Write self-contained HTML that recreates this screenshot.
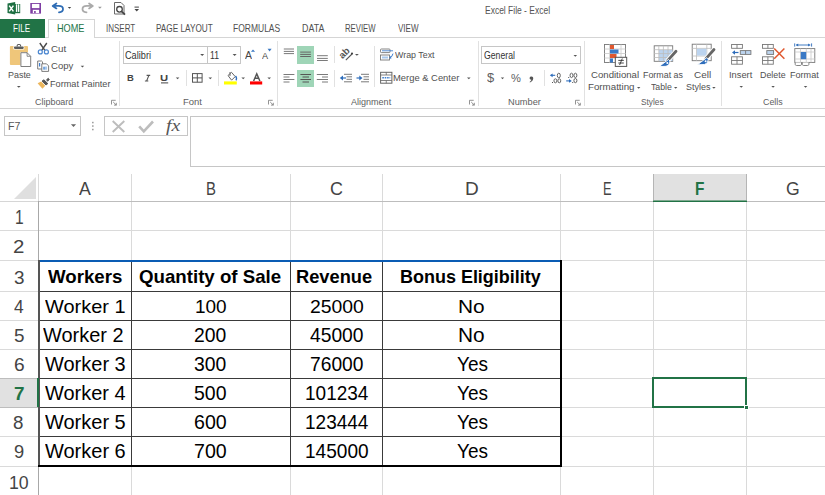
<!DOCTYPE html>
<html><head><meta charset="utf-8"><style>
html,body{margin:0;padding:0;background:#fff;}
body{width:825px;height:495px;overflow:hidden;position:relative;font-family:"Liberation Sans",sans-serif;}
.a{position:absolute;}
.t{position:absolute;white-space:nowrap;transform-origin:0 0;font-family:"Liberation Sans",sans-serif;}
svg{position:absolute;overflow:visible;}
</style></head><body>
<!-- tabs -->
<div class="a" style="left:0;top:37px;width:825px;height:1px;background:#d5d5d5"></div>
<div class="a" style="left:0;top:19px;width:45px;height:19px;background:#217346"></div>
<div class="a" style="left:48px;top:19px;width:45px;height:18px;background:#fff;border:1px solid #d5d5d5;border-bottom:none"></div>
<!-- ribbon bottom -->
<div class="a" style="left:0;top:108px;width:825px;height:1px;background:#d4d4d4"></div>
<!-- group separators -->
<div class="a" style="left:119px;top:41px;width:1px;height:65px;background:#e1e1e1"></div>
<div class="a" style="left:277px;top:41px;width:1px;height:65px;background:#e1e1e1"></div>
<div class="a" style="left:478px;top:41px;width:1px;height:65px;background:#e1e1e1"></div>
<div class="a" style="left:584px;top:41px;width:1px;height:65px;background:#e1e1e1"></div>
<div class="a" style="left:721px;top:41px;width:1px;height:65px;background:#e1e1e1"></div>
<!-- font boxes -->
<div class="a" style="left:123px;top:46px;width:116px;height:16px;border:1px solid #c6c6c6;background:#fff"></div>
<div class="a" style="left:207px;top:46px;width:1px;height:18px;background:#c6c6c6"></div>
<div class="a" style="left:186px;top:70px;width:1px;height:16px;background:#e1e1e1"></div>
<div class="a" style="left:218px;top:70px;width:1px;height:16px;background:#e1e1e1"></div>
<!-- alignment highlights -->
<div class="a" style="left:297px;top:46px;width:17px;height:18px;background:#9fd5b7"></div>
<div class="a" style="left:297px;top:70px;width:17px;height:17px;background:#9fd5b7"></div>
<div class="a" style="left:334px;top:46px;width:1px;height:17px;background:#e1e1e1"></div>
<div class="a" style="left:334px;top:70px;width:1px;height:17px;background:#e1e1e1"></div>
<div class="a" style="left:374px;top:46px;width:1px;height:41px;background:#e1e1e1"></div>
<!-- number box -->
<div class="a" style="left:481px;top:46px;width:98px;height:16px;border:1px solid #c6c6c6;background:#fff"></div>
<div class="a" style="left:544px;top:70px;width:1px;height:16px;background:#e1e1e1"></div>
<!-- formula bar -->
<div class="a" style="left:4px;top:116px;width:75px;height:18px;border:1px solid #c6c6c6"></div>
<div class="a" style="left:104px;top:116px;width:82px;height:18px;border:1px solid #c6c6c6"></div>
<div class="a" style="left:190px;top:116px;width:640px;height:49px;border:1px solid #c6c6c6"></div>

<!-- ===== grid ===== -->
<!-- highlighted headers -->
<div class="a" style="left:653px;top:174px;width:93px;height:27px;background:#e1e1e1"></div>
<div class="a" style="left:0;top:378px;width:38px;height:29px;background:#e1e1e1"></div>
<!-- column header separators -->
<div class="a" style="left:38px;top:174px;width:1px;height:27px;background:#dadada"></div>
<div class="a" style="left:131px;top:174px;width:1px;height:321px;background:#dadada"></div>
<div class="a" style="left:290px;top:174px;width:1px;height:321px;background:#dadada"></div>
<div class="a" style="left:382px;top:174px;width:1px;height:321px;background:#dadada"></div>
<div class="a" style="left:560px;top:174px;width:1px;height:321px;background:#dadada"></div>
<div class="a" style="left:653px;top:174px;width:1px;height:321px;background:#dadada"></div>
<div class="a" style="left:746px;top:174px;width:1px;height:321px;background:#dadada"></div>
<div class="a" style="left:653px;top:174px;width:1px;height:27px;background:#b5b5b5"></div>
<div class="a" style="left:746px;top:174px;width:1px;height:27px;background:#b5b5b5"></div>
<!-- row lines -->
<div class="a" style="left:0;top:230px;width:825px;height:1px;background:#dadada"></div>
<div class="a" style="left:0;top:260px;width:825px;height:1px;background:#dadada"></div>
<div class="a" style="left:0;top:291px;width:825px;height:1px;background:#dadada"></div>
<div class="a" style="left:0;top:320px;width:825px;height:1px;background:#dadada"></div>
<div class="a" style="left:0;top:349px;width:825px;height:1px;background:#dadada"></div>
<div class="a" style="left:0;top:378px;width:825px;height:1px;background:#dadada"></div>
<div class="a" style="left:0;top:407px;width:825px;height:1px;background:#dadada"></div>
<div class="a" style="left:0;top:436px;width:825px;height:1px;background:#dadada"></div>
<div class="a" style="left:0;top:466px;width:825px;height:1px;background:#dadada"></div>
<div class="a" style="left:0;top:378px;width:38px;height:1px;background:#bdbdbd"></div>
<div class="a" style="left:0;top:407px;width:38px;height:1px;background:#bdbdbd"></div>
<!-- header bottom & row header right -->
<div class="a" style="left:0;top:201px;width:38px;height:1px;background:#d6d6d6"></div>
<div class="a" style="left:38px;top:201px;width:787px;height:1px;background:#bdbdbd"></div>
<div class="a" style="left:38px;top:201px;width:1px;height:294px;background:#a8a8a8"></div>
<div class="a" style="left:653px;top:200px;width:94px;height:1px;background:#7fa98f"></div>
<div class="a" style="left:653px;top:201px;width:94px;height:1px;background:#217346"></div>
<div class="a" style="left:37px;top:378px;width:2px;height:29px;background:#217346"></div>
<!-- corner triangle -->
<svg style="left:0;top:0" width="1" height="1"></svg>
<svg style="left:14px;top:177px" width="22" height="22" viewBox="0 0 22 22"><polygon points="22,0 22,22 0,22" fill="#dfdfdf"/></svg>

<!-- table inner borders -->
<div class="a" style="left:38px;top:291px;width:523px;height:1px;background:#3a3a3a"></div>
<div class="a" style="left:38px;top:320px;width:523px;height:1px;background:#3a3a3a"></div>
<div class="a" style="left:38px;top:349px;width:523px;height:1px;background:#3a3a3a"></div>
<div class="a" style="left:38px;top:378px;width:523px;height:1px;background:#3a3a3a"></div>
<div class="a" style="left:38px;top:407px;width:523px;height:1px;background:#3a3a3a"></div>
<div class="a" style="left:38px;top:436px;width:523px;height:1px;background:#3a3a3a"></div>
<div class="a" style="left:131px;top:260px;width:1px;height:206px;background:#3a3a3a"></div>
<div class="a" style="left:290px;top:260px;width:1px;height:206px;background:#3a3a3a"></div>
<div class="a" style="left:382px;top:260px;width:1px;height:206px;background:#3a3a3a"></div>
<!-- table outer -->
<div class="a" style="left:38px;top:260px;width:2px;height:207px;background:#555"></div>
<div class="a" style="left:560px;top:260px;width:2px;height:207px;background:#000"></div>
<div class="a" style="left:38px;top:465px;width:524px;height:2px;background:#000"></div>
<div class="a" style="left:40px;top:260px;width:520px;height:2px;background:#0a5cb4"></div>
<div class="a" style="left:37px;top:378px;width:2px;height:29px;background:#217346"></div>

<!-- selection -->
<div class="a" style="left:652px;top:377px;width:91px;height:27px;border:2px solid #217346"></div>
<div class="a" style="left:744px;top:405px;width:5px;height:5px;background:#217346;border:1px solid #fff;box-sizing:border-box;"></div>
<svg style="left:0;top:0" width="825" height="175" viewBox="0 0 825 175">
<!-- QAT: excel logo -->
<path d="M7.5 3.6 L15.2 2.1 L15.2 14.6 L7.5 13.1 Z" fill="#1d6f42"/>
<rect x="14" y="4" width="6.2" height="9.2" fill="#1d6f42"/>
<rect x="15.9" y="4.3" width="1.4" height="7.6" fill="#fff"/>
<rect x="18" y="4.3" width="1.3" height="7.6" fill="#fff"/>
<path d="M9.2 5.6 L13.4 11.4 M13.4 5.6 L9.2 11.4" stroke="#fff" stroke-width="1.5"/>
<!-- save -->
<rect x="30.3" y="3" width="10.7" height="10.6" fill="#7e3ea3"/>
<rect x="31.9" y="3.9" width="7.5" height="4.2" fill="#fff"/>
<rect x="32.8" y="9.8" width="6.3" height="3.3" fill="#fff"/>
<rect x="34.1" y="11" width="1.6" height="2.1" fill="#7e3ea3"/>
<!-- undo -->
<path d="M56.4 3.4 L52.7 5.9 L56.4 8.4 M52.9 5.9 H58.6 C61.8 5.9 63 7.6 63 9.2 C63 10.8 61.8 12 59 12.4" fill="none" stroke="#2f6db5" stroke-width="1.8" stroke-linecap="round" stroke-linejoin="round"/>
<path d="M67.8 6.9 H71.2 L69.5 8.8 Z" fill="#444"/>
<!-- redo -->
<path d="M89.1 3.4 L92.8 5.9 L89.1 8.4 M92.6 5.9 H86.9 C83.7 5.9 82.5 7.6 82.5 9.2 C82.5 10.8 83.7 12 86.5 12.4" fill="none" stroke="#aaaaaa" stroke-width="1.8" stroke-linecap="round" stroke-linejoin="round"/>
<path d="M98 6.8 H101.8 L99.9 8.8 Z" fill="#9a9a9a"/>
<!-- print preview -->
<path d="M114.5 2.5 H121 L124 5.5 V14 H114.5 Z" fill="#fff" stroke="#6a6a6a" stroke-width="1"/>
<circle cx="119.5" cy="9.3" r="2.8" fill="#fff" stroke="#444" stroke-width="1.3"/>
<path d="M121.5 11.3 L125 14.6" stroke="#444" stroke-width="1.8"/>
<!-- customize -->
<rect x="134.5" y="6.6" width="4.4" height="1" fill="#444"/>
<path d="M134.5 9 H139 L136.75 11.4 Z" fill="#444"/>

<!-- Paste -->
<rect x="9.9" y="46" width="18.1" height="18.9" rx="1" fill="#efc67a"/>
<rect x="13.3" y="45.9" width="11" height="3.6" rx="1" fill="#fff"/>
<rect x="14" y="46.4" width="9.7" height="2.5" rx="0.8" fill="#5c5c5c"/>
<path d="M17.2 46.6 V45.6 Q17.2 44.5 18.3 44.5 H19.5 Q20.6 44.5 20.6 45.6 V46.6" fill="none" stroke="#5c5c5c" stroke-width="1.1"/>
<path d="M20.4 52.2 H27.3 L31.2 56.1 V67 H20.4 Z" fill="#fff"/>
<path d="M20.9 52.7 H27.1 L30.7 56.3 V66.5 H20.9 Z" fill="#fff" stroke="#707070" stroke-width="0.9"/>
<path d="M27.1 52.7 V56.3 H30.7" fill="none" stroke="#707070" stroke-width="0.8"/>
<path d="M16.9 86 H20.7 L18.8 87.8 Z" fill="#555"/>
<!-- Cut -->
<path d="M39.8 43 L44.9 50.3 M46.8 43 L41.7 50.3" stroke="#4a4a4a" stroke-width="1.4"/>
<circle cx="40.3" cy="51.9" r="2" fill="none" stroke="#4a86d0" stroke-width="1.2"/>
<circle cx="46.4" cy="51.9" r="2" fill="none" stroke="#4a86d0" stroke-width="1.2"/>
<!-- Copy -->
<path d="M37.7 61 H41.7 L42.5 61.8 V69 H37.7 Z" fill="#fff" stroke="#6d6d6d" stroke-width="0.9"/>
<rect x="39" y="63" width="1.2" height="3.5" fill="#3f7fcf"/>
<path d="M41.8 63.8 H46.5 L48.6 65.9 V71.4 H41.8 Z" fill="#fff" stroke="#6d6d6d" stroke-width="0.9"/>
<rect x="43.3" y="66.5" width="3.8" height="3.2" fill="#a8c8ec"/>
<rect x="43.5" y="67" width="1" height="2.5" fill="#3f7fcf"/>
<path d="M80.7 65.8 H84.2 L82.45 67.5 Z" fill="#555"/>
<!-- Format painter -->
<path d="M37.6 83.3 L41.1 81.6 L45.3 85.8 L42.4 88.7 Z" fill="#ecb65c"/>
<path d="M42 81.1 L43.9 79.8 L47.8 83.6 L46 85 Z" fill="#555" stroke="#555" stroke-width="1" stroke-linejoin="round"/>
<path d="M46.6 79.7 L48.3 78.3 L49.3 79.5 L47.6 81.3 Z" fill="#555" stroke="#555" stroke-width="0.9" stroke-linejoin="round"/>
<!-- launchers -->
<g fill="none" stroke="#777" stroke-width="0.8">
<path d="M111.5 104.5 V100.3 H115.7 M113.2 102 L116.3 105.1 M116.3 102.8 V105.1 H114"/>
<path d="M268.5 104.5 V100.3 H272.7 M270.2 102 L273.3 105.1 M273.3 102.8 V105.1 H271"/>
<path d="M469.5 104.5 V100.3 H473.7 M471.2 102 L474.3 105.1 M474.3 102.8 V105.1 H472"/>
<path d="M575.5 104.5 V100.3 H579.7 M577.2 102 L580.3 105.1 M580.3 102.8 V105.1 H578"/>
</g>

<!-- font dropdowns -->
<path d="M200.2 54 H204.2 L202.2 56 Z" fill="#555"/>
<path d="M232.6 54 H236.6 L234.6 56 Z" fill="#555"/>
<!-- grow / shrink triangles -->
<path d="M250.9 51.8 L253 49.4 L255.1 51.8 Z" fill="#3a78c3"/>
<path d="M267.6 48.8 H271.6 L269.6 51.6 Z" fill="#3a78c3"/>
<!-- italic I -->
<path d="M146.6 75.4 H150.2 M148.9 75.4 L146.6 81 M144.9 81 H148.3" stroke="#555" stroke-width="1.1" fill="none"/>
<!-- underline -->
<rect x="161" y="82.4" width="7.2" height="1" fill="#444"/>
<path d="M175.8 77.5 H179.4 L177.6 79.3 Z" fill="#555"/>
<!-- borders -->
<rect x="192.5" y="73.6" width="9.6" height="8.6" fill="none" stroke="#555" stroke-width="1"/>
<path d="M197.3 73.6 V82.2 M192.5 77.9 H202.1" stroke="#555" stroke-width="1"/>
<path d="M208.5 77.5 H212.1 L210.3 79.3 Z" fill="#555"/>
<!-- fill color -->
<path d="M228 75.5 L231.5 72.3 L235.2 76.6 L231.6 80.2 Z" fill="#fff" stroke="#666" stroke-width="1"/>
<path d="M230 72 V76" stroke="#666" stroke-width="1"/>
<path d="M235.5 76 Q237.3 78.3 236 80.3" fill="none" stroke="#2e6dbb" stroke-width="1.3"/>
<rect x="224" y="81.4" width="12.8" height="3.1" fill="#ffff00"/>
<path d="M241.4 77.5 H245 L243.2 79.3 Z" fill="#555"/>
<!-- font color -->
<path d="M253.6 81 L256.75 73.8 L259.9 81 M254.9 78.3 H258.6" fill="none" stroke="#555" stroke-width="1.5"/>
<rect x="250" y="81.4" width="12.2" height="3.1" fill="#ff0000"/>
<path d="M267.4 77.5 H271 L269.2 79.3 Z" fill="#555"/>

<!-- alignment -->
<g stroke="#7a7a7a" stroke-width="1">
<path d="M283.8 49 H294 M283.8 51.4 H294 M283.8 53.6 H294"/>
<path d="M300.2 52.1 H310.9 M300.2 54.4 H310.9 M300.2 56.5 H310.9" stroke="#666"/>
<path d="M317 55.7 H327.8 M317 58.4 H327.8 M317 60.5 H327.8"/>
<path d="M283.5 74.5 H294.4 M283.5 77 H289.5 M283.5 79.5 H294.4 M283.5 82 H289.5"/>
<path d="M300.4 74.5 H311 M302.5 77 H309 M300.4 79.5 H311 M302.5 82 H309" stroke="#555"/>
<path d="M316.8 74.5 H328 M322 77 H328 M316.8 79.5 H328 M322 82 H328"/>
<path d="M344 74.3 H352 M346.5 76.8 H352 M346.5 79.3 H352 M344 81.8 H352"/>
<path d="M361 74.3 H369 M363.5 76.8 H369 M363.5 79.3 H369 M361 81.8 H369"/>
</g>
<path d="M339.8 78 L343 75.6 V80.4 Z" fill="#2e6dbb"/>
<path d="M342 78 H346" stroke="#2e6dbb" stroke-width="1.2"/>
<path d="M362.5 78 L359.3 75.6 V80.4 Z" fill="#2e6dbb"/>
<path d="M356.5 78 H360" stroke="#2e6dbb" stroke-width="1.2"/>
<!-- orientation -->
<text x="0" y="0" transform="translate(342.6 59.2) rotate(-45)" font-family="Liberation Sans" font-weight="bold" font-size="9.6" fill="#555">ab</text>
<path d="M345.8 60.2 L352 54" stroke="#555" stroke-width="1.1"/>
<circle cx="352" cy="53.6" r="1.1" fill="#444"/>
<path d="M355 53.9 H358.8 L356.9 55.8 Z" fill="#555"/>
<!-- wrap text -->
<rect x="380.5" y="49" width="9.5" height="3.6" rx="0.8" fill="#fff" stroke="#777" stroke-width="0.9"/>
<path d="M382 50.8 H393" stroke="#3f7fcf" stroke-width="0.9"/>
<rect x="380.5" y="55" width="9" height="5" fill="#fff" stroke="#777" stroke-width="0.9"/>
<rect x="382" y="56.5" width="6" height="2" fill="#a8c8ec"/>
<path d="M393 53.6 Q392.3 57.2 389.5 57.6" fill="none" stroke="#3f7fcf" stroke-width="1"/>
<path d="M389.3 57.6 L391.2 56 V59.2 Z" fill="#3f7fcf"/>
<!-- merge & center -->
<rect x="380.6" y="72.3" width="11.3" height="10.9" fill="#fff" stroke="#666" stroke-width="1"/>
<path d="M380.6 75 H391.9 M380.6 80.5 H391.9 M386.25 72.3 V75 M386.25 80.5 V83.2" stroke="#666" stroke-width="0.8"/>
<path d="M382.3 77.75 H390.2" stroke="#3f7fcf" stroke-width="1.6" stroke-dasharray="1.6 0.8"/>
<path d="M467 77.5 H470.6 L468.8 79.3 Z" fill="#555"/>

<!-- number -->
<path d="M573.5 55 H577.1 L575.3 56.8 Z" fill="#555"/>
<path d="M500.8 77.5 H504.2 L502.5 79.3 Z" fill="#555"/>
<path d="M531.4 76.4 C533 76.4 533.4 77.6 533.2 78.8 C533 80.6 531.6 81.8 530 82.6 L529.6 82 C530.8 81.2 531.3 80.5 531.3 79.8 C530.2 79.8 529.6 79.1 529.6 78.1 C529.6 77.1 530.4 76.4 531.4 76.4 Z" fill="#555"/>
<g fill="none" stroke="#555" stroke-width="0.9">
<ellipse cx="558.8" cy="75.5" rx="1.5" ry="2.3"/>
<ellipse cx="555.4" cy="80.8" rx="1.45" ry="2"/>
<ellipse cx="559.3" cy="80.8" rx="1.45" ry="2"/>
<ellipse cx="571.5" cy="75.4" rx="1.45" ry="2.2"/>
<ellipse cx="575.4" cy="75.4" rx="1.45" ry="2.2"/>
<ellipse cx="575.4" cy="80.6" rx="1.5" ry="2.1"/>
</g>
<g fill="#555">
<rect x="552" y="82" width="1" height="1"/>
<rect x="568.2" y="77" width="1" height="1"/>
<rect x="572.2" y="82" width="1" height="1"/>
</g>
<path d="M549.8 75.3 L552.6 73.4 V77.2 Z" fill="#2e6dbb"/><path d="M552 75.3 H555.2" stroke="#2e6dbb" stroke-width="1.1"/>
<path d="M571.8 80.9 L569 79 V82.8 Z" fill="#2e6dbb"/><path d="M566.2 80.9 H569.5" stroke="#2e6dbb" stroke-width="1.1"/>

<!-- conditional formatting -->
<rect x="604.5" y="44.5" width="21" height="18" fill="#fff" stroke="#777" stroke-width="0.9"/>
<path d="M609.6 44.5 V62.5 M621 44.5 V62.5 M604.5 49 H625.5 M604.5 53.5 H625.5 M604.5 58 H625.5" stroke="#cfcfcf" stroke-width="0.9"/>
<rect x="610" y="45" width="4" height="4" fill="#e0582f"/>
<rect x="610" y="49.5" width="8.5" height="4" fill="#3b7ac6"/>
<rect x="610" y="54" width="6.5" height="4" fill="#e0582f"/>
<rect x="610" y="58.5" width="3" height="4" fill="#3b7ac6"/>
<rect x="615.3" y="57.3" width="11.4" height="9.1" fill="#fff" stroke="#555" stroke-width="1"/>
<path d="M618.3 60.4 H623.8 M618.3 63 H623.8 M622.3 58.5 L619.6 65" stroke="#333" stroke-width="0.9"/>

<!-- format as table -->
<rect x="654.2" y="45.8" width="18.5" height="15.5" fill="#fff" stroke="#777" stroke-width="0.9"/>
<rect x="659" y="50" width="13.5" height="11" fill="#bcd4ef"/>
<path d="M658.8 45.8 V61.3 M663.4 45.8 V61.3 M668 45.8 V61.3 M654.2 49.7 H672.7 M654.2 53.6 H672.7 M654.2 57.5 H672.7" stroke="#bdbdbd" stroke-width="0.8"/>
<path d="M676 51.2 L667.6 60.6" stroke="#fff" stroke-width="4.6" stroke-linecap="round"/><path d="M676 51.2 L667.6 60.6" stroke="#666" stroke-width="2.8" stroke-linecap="round"/>
<path d="M668.5 59.5 L662.5 64 L659.2 66.6 L666 66.3 C668.5 65.7 669.6 63.6 670 61 Z" fill="#2e6dbb" stroke="#fff" stroke-width="0.9"/>
<circle cx="667.3" cy="63" r="1" fill="#fff"/>

<!-- cell styles -->
<rect x="692.2" y="44.2" width="19" height="16.5" fill="#fff" stroke="#777" stroke-width="0.9"/>
<path d="M696.5 44.2 V60.7 M706.8 44.2 V60.7 M692.2 48.4 H711.2 M692.2 56 H711.2" stroke="#bdbdbd" stroke-width="0.8"/>
<rect x="696.9" y="48.8" width="9.5" height="6.8" fill="#bcd4ef"/>
<path d="M714 49.5 L706 58.7" stroke="#fff" stroke-width="4.6" stroke-linecap="round"/><path d="M714 49.5 L706 58.7" stroke="#666" stroke-width="2.8" stroke-linecap="round"/>
<path d="M706.8 57.6 L700.8 62.2 L697.5 64.8 L704.3 64.5 C706.8 63.9 707.9 61.8 708.3 59.2 Z" fill="#2e6dbb" stroke="#fff" stroke-width="0.9"/>
<circle cx="705.6" cy="61.2" r="1" fill="#fff"/>
<g fill="#555">
<path d="M637 87 H640.4 L638.7 88.8 Z"/>
<path d="M674 87 H677.4 L675.7 88.8 Z"/>
<path d="M712.2 87 H715.6 L713.9 88.8 Z"/>
<path d="M739.5 86 H743 L741.25 87.8 Z"/>
<path d="M771.3 86 H774.8 L773.05 87.8 Z"/>
<path d="M803.8 86 H807.3 L805.55 87.8 Z"/>
</g>

<!-- insert -->
<g fill="#fff" stroke="#777" stroke-width="0.9">
<rect x="731.6" y="44.5" width="10.8" height="3.8"/>
<rect x="731.6" y="56.8" width="10.8" height="7.4"/>
<rect x="762.5" y="44.5" width="10.8" height="3.8"/>
<rect x="762.5" y="56.8" width="10.8" height="7.4"/>
</g>
<path d="M737 44.5 V48.3 M737 56.8 V64.2 M731.6 60.5 H742.4 M767.9 44.5 V48.3 M767.9 56.8 V64.2 M762.5 60.5 H773.3" stroke="#777" stroke-width="0.9"/>
<rect x="740.3" y="50.6" width="10.6" height="3.8" fill="#bcd4ef" stroke="#777" stroke-width="0.9"/>
<path d="M745.6 50.6 V54.4" stroke="#777" stroke-width="0.9"/>
<path d="M732 52.5 L735 50.2 V54.8 Z" fill="#2e6dbb"/><path d="M734.5 52.5 H738.5" stroke="#2e6dbb" stroke-width="1.2"/>
<!-- delete -->
<rect x="766.8" y="50.6" width="6.8" height="3.8" fill="#bcd4ef" stroke="#777" stroke-width="0.9"/>
<path d="M774.2 48.5 L784.4 58.8 M784.4 48.5 L774.2 58.8" stroke="#e0582f" stroke-width="1.5"/>
<!-- format -->
<path d="M794.7 43.4 V46.6 M811.6 43.4 V46.6" stroke="#2e6dbb" stroke-width="0.9"/>
<path d="M796 45 H810.3" stroke="#2e6dbb" stroke-width="0.9"/>
<path d="M796 45 L798.2 43.5 V46.5 Z M810.3 45 L808.1 43.5 V46.5 Z" fill="#2e6dbb"/>
<rect x="794.8" y="48.6" width="20" height="13.8" fill="#fff" stroke="#777" stroke-width="0.9"/>
<path d="M794.8 52 H814.8 M794.8 59 H814.8 M800.5 48.6 V62.4 M806.3 48.6 V62.4 M811 48.6 V62.4" stroke="#c8c8c8" stroke-width="0.8"/>
<path d="M795.2 62.4 V64.4 Q795.4 65.5 796.5 65.5 H800.2 Q801.3 65.5 801.5 64.4 V62.4 M802.3 62.4 V64.4 Q802.5 65.5 803.6 65.5 H807.6 Q808.7 65.5 808.9 64.4 V62.4" fill="#fff" stroke="#777" stroke-width="0.9"/>
<rect x="800.8" y="52" width="5.4" height="7.2" fill="#3b7ac6"/>

<!-- formula bar -->
<path d="M70.9 124.2 H76.1 L73.5 127 Z" fill="#666"/>
<g fill="#888"><rect x="92.2" y="121.8" width="1.3" height="1.5"/><rect x="92.2" y="125.3" width="1.3" height="1.5"/><rect x="92.2" y="128.8" width="1.3" height="1.5"/></g>
<path d="M112.7 121 L124.3 132 M124.3 121 L112.7 132" stroke="#bdbdbd" stroke-width="1.9"/>
<path d="M139.2 126.3 L143.8 131.3 L153 121.5" fill="none" stroke="#bdbdbd" stroke-width="2.6"/>
</svg>

<span class="t" style="left:485.32px;top:6.00px;font-size:10.15px;line-height:10.15px;transform:scaleX(0.8378);color:#555;font-weight:normal;">Excel File - Excel</span>
<span class="t" style="left:12.96px;top:24.00px;font-size:10.30px;line-height:10.30px;transform:scaleX(0.7818);color:#fff;font-weight:normal;">FILE</span>
<span class="t" style="left:57.06px;top:24.00px;font-size:10.30px;line-height:10.30px;transform:scaleX(0.8895);color:#217346;font-weight:normal;">HOME</span>
<span class="t" style="left:106.30px;top:24.00px;font-size:10.30px;line-height:10.30px;transform:scaleX(0.7750);color:#505050;font-weight:normal;">INSERT</span>
<span class="t" style="left:155.54px;top:24.00px;font-size:10.30px;line-height:10.30px;transform:scaleX(0.7986);color:#505050;font-weight:normal;">PAGE LAYOUT</span>
<span class="t" style="left:233.33px;top:24.00px;font-size:10.30px;line-height:10.30px;transform:scaleX(0.8248);color:#505050;font-weight:normal;">FORMULAS</span>
<span class="t" style="left:301.72px;top:24.00px;font-size:10.30px;line-height:10.30px;transform:scaleX(0.8602);color:#505050;font-weight:normal;">DATA</span>
<span class="t" style="left:345.38px;top:24.00px;font-size:10.30px;line-height:10.30px;transform:scaleX(0.7524);color:#505050;font-weight:normal;">REVIEW</span>
<span class="t" style="left:398.40px;top:24.00px;font-size:10.30px;line-height:10.30px;transform:scaleX(0.7814);color:#505050;font-weight:normal;">VIEW</span>
<span class="t" style="left:7.51px;top:71.00px;font-size:9.30px;line-height:9.30px;transform:scaleX(0.9608);color:#505050;font-weight:normal;">Paste</span>
<span class="t" style="left:50.73px;top:44.00px;font-size:9.90px;line-height:9.90px;transform:scaleX(0.9923);color:#505050;font-weight:normal;">Cut</span>
<span class="t" style="left:50.74px;top:61.00px;font-size:9.75px;line-height:9.75px;transform:scaleX(0.9793);color:#505050;font-weight:normal;">Copy</span>
<span class="t" style="left:50.48px;top:79.00px;font-size:9.60px;line-height:9.60px;transform:scaleX(0.9523);color:#505050;font-weight:normal;">Format Painter</span>
<span class="t" style="left:35.15px;top:98.00px;font-size:8.70px;line-height:8.70px;transform:scaleX(1.0301);color:#606060;font-weight:normal;">Clipboard</span>
<span class="t" style="left:124.54px;top:51.00px;font-size:10.15px;line-height:10.15px;transform:scaleX(0.9049);color:#333;font-weight:normal;">Calibri</span>
<span class="t" style="left:209.79px;top:51.00px;font-size:10.15px;line-height:10.15px;transform:scaleX(0.8549);color:#333;font-weight:normal;">11</span>
<span class="t" style="left:182.66px;top:97.00px;font-size:9.45px;line-height:9.45px;transform:scaleX(1.0029);color:#606060;font-weight:normal;">Font</span>
<span class="t" style="left:395.20px;top:50.00px;font-size:9.90px;line-height:9.90px;transform:scaleX(0.8965);color:#505050;font-weight:normal;">Wrap Text</span>
<span class="t" style="left:393.46px;top:73.00px;font-size:9.75px;line-height:9.75px;transform:scaleX(0.9632);color:#505050;font-weight:normal;">Merge &amp; Center</span>
<span class="t" style="left:351.00px;top:97.00px;font-size:9.45px;line-height:9.45px;transform:scaleX(0.9564);color:#606060;font-weight:normal;">Alignment</span>
<span class="t" style="left:483.56px;top:51.00px;font-size:10.15px;line-height:10.15px;transform:scaleX(0.8578);color:#333;font-weight:normal;">General</span>
<span class="t" style="left:508.28px;top:98.00px;font-size:9.15px;line-height:9.15px;transform:scaleX(1.0118);color:#606060;font-weight:normal;">Number</span>
<span class="t" style="left:590.52px;top:70.00px;font-size:9.75px;line-height:9.75px;transform:scaleX(0.9858);color:#505050;font-weight:normal;">Conditional</span>
<span class="t" style="left:588.42px;top:82.00px;font-size:9.75px;line-height:9.75px;transform:scaleX(0.9986);color:#505050;font-weight:normal;">Formatting</span>
<span class="t" style="left:643.29px;top:70.00px;font-size:9.75px;line-height:9.75px;transform:scaleX(0.9110);color:#505050;font-weight:normal;">Format as</span>
<span class="t" style="left:650.82px;top:82.00px;font-size:9.75px;line-height:9.75px;transform:scaleX(0.8970);color:#505050;font-weight:normal;">Table</span>
<span class="t" style="left:693.52px;top:70.00px;font-size:9.75px;line-height:9.75px;transform:scaleX(1.0211);color:#505050;font-weight:normal;">Cell</span>
<span class="t" style="left:685.64px;top:82.00px;font-size:9.75px;line-height:9.75px;transform:scaleX(0.9206);color:#505050;font-weight:normal;">Styles</span>
<span class="t" style="left:640.68px;top:97.00px;font-size:9.45px;line-height:9.45px;transform:scaleX(0.8784);color:#606060;font-weight:normal;">Styles</span>
<span class="t" style="left:729.19px;top:70.00px;font-size:9.75px;line-height:9.75px;transform:scaleX(0.9536);color:#505050;font-weight:normal;">Insert</span>
<span class="t" style="left:759.70px;top:70.00px;font-size:9.75px;line-height:9.75px;transform:scaleX(0.9099);color:#505050;font-weight:normal;">Delete</span>
<span class="t" style="left:790.27px;top:70.00px;font-size:9.75px;line-height:9.75px;transform:scaleX(0.9296);color:#505050;font-weight:normal;">Format</span>
<span class="t" style="left:762.58px;top:97.00px;font-size:9.45px;line-height:9.45px;transform:scaleX(0.9413);color:#606060;font-weight:normal;">Cells</span>
<span class="t" style="left:487.07px;top:72.00px;font-size:12.35px;line-height:12.35px;transform:scaleX(1.0472);color:#606060;font-weight:normal;">$</span>
<span class="t" style="left:510.65px;top:72.00px;font-size:11.65px;line-height:11.65px;transform:scaleX(0.9539);color:#606060;font-weight:normal;">%</span>
<span class="t" style="left:8.19px;top:121.00px;font-size:10.60px;line-height:10.60px;transform:scaleX(1.0016);color:#555;font-weight:normal;">F7</span>
<span class="t" style="left:79.20px;top:179.00px;font-size:19.20px;line-height:19.20px;transform:scaleX(0.9196);color:#444;font-weight:normal;">A</span>
<span class="t" style="left:205.54px;top:179.00px;font-size:19.20px;line-height:19.20px;transform:scaleX(0.7770);color:#444;font-weight:normal;">B</span>
<span class="t" style="left:330.37px;top:179.00px;font-size:19.20px;line-height:19.20px;transform:scaleX(0.9340);color:#444;font-weight:normal;">C</span>
<span class="t" style="left:464.52px;top:179.00px;font-size:19.20px;line-height:19.20px;transform:scaleX(0.9901);color:#444;font-weight:normal;">D</span>
<span class="t" style="left:602.71px;top:179.00px;font-size:19.20px;line-height:19.20px;transform:scaleX(0.6688);color:#444;font-weight:normal;">E</span>
<span class="t" style="left:786.14px;top:179.00px;font-size:19.20px;line-height:19.20px;transform:scaleX(0.9179);color:#444;font-weight:normal;">G</span>
<span class="t" style="left:694.88px;top:179.00px;font-size:19.20px;line-height:19.20px;transform:scaleX(0.8013);color:#217346;font-weight:bold;">F</span>
<span class="t" style="left:14.85px;top:208.00px;font-size:19.30px;line-height:19.30px;transform:scaleX(0.8073);color:#444;font-weight:normal;">1</span>
<span class="t" style="left:13.01px;top:237.00px;font-size:19.20px;line-height:19.20px;transform:scaleX(1.0651);color:#444;font-weight:normal;">2</span>
<span class="t" style="left:13.66px;top:268.00px;font-size:19.20px;line-height:19.20px;transform:scaleX(0.9837);color:#444;font-weight:normal;">3</span>
<span class="t" style="left:13.82px;top:297.00px;font-size:19.20px;line-height:19.20px;transform:scaleX(0.9041);color:#444;font-weight:normal;">4</span>
<span class="t" style="left:14.29px;top:326.00px;font-size:19.20px;line-height:19.20px;transform:scaleX(0.9834);color:#444;font-weight:normal;">5</span>
<span class="t" style="left:14.24px;top:355.00px;font-size:19.20px;line-height:19.20px;transform:scaleX(0.9973);color:#444;font-weight:normal;">6</span>
<span class="t" style="left:14.29px;top:384.00px;font-size:19.20px;line-height:19.20px;transform:scaleX(0.9834);color:#217346;font-weight:bold;">7</span>
<span class="t" style="left:13.45px;top:413.00px;font-size:19.20px;line-height:19.20px;transform:scaleX(0.9766);color:#444;font-weight:normal;">8</span>
<span class="t" style="left:14.24px;top:442.00px;font-size:19.20px;line-height:19.20px;transform:scaleX(0.9537);color:#444;font-weight:normal;">9</span>
<span class="t" style="left:9.17px;top:473.00px;font-size:19.20px;line-height:19.20px;transform:scaleX(0.9224);color:#444;font-weight:normal;">10</span>
<span class="t" style="left:48.20px;top:268.00px;font-size:18.60px;line-height:18.60px;transform:scaleX(1.0025);color:#000;font-weight:bold;">Workers</span>
<span class="t" style="left:139.45px;top:268.00px;font-size:18.60px;line-height:18.60px;transform:scaleX(1.0046);color:#000;font-weight:bold;">Quantity of Sale</span>
<span class="t" style="left:295.50px;top:268.00px;font-size:18.60px;line-height:18.60px;transform:scaleX(0.9825);color:#000;font-weight:bold;">Revenue</span>
<span class="t" style="left:399.93px;top:268.00px;font-size:18.60px;line-height:18.60px;transform:scaleX(0.9664);color:#000;font-weight:bold;">Bonus Eligibility</span>
<span class="t" style="left:45.00px;top:297.00px;font-size:19.25px;line-height:19.25px;transform:scaleX(1.0359);color:#000;font-weight:normal;">Worker 1</span>
<span class="t" style="left:195.04px;top:297.00px;font-size:19.25px;line-height:19.25px;transform:scaleX(0.9850);color:#000;font-weight:normal;">100</span>
<span class="t" style="left:309.64px;top:297.00px;font-size:19.25px;line-height:19.25px;transform:scaleX(1.0065);color:#000;font-weight:normal;">25000</span>
<span class="t" style="left:458.40px;top:297.00px;font-size:19.25px;line-height:19.25px;transform:scaleX(1.0828);color:#000;font-weight:normal;">No</span>
<span class="t" style="left:43.20px;top:326.00px;font-size:19.35px;line-height:19.35px;transform:scaleX(1.0306);color:#000;font-weight:normal;">Worker 2</span>
<span class="t" style="left:194.44px;top:326.00px;font-size:19.35px;line-height:19.35px;transform:scaleX(0.9998);color:#000;font-weight:normal;">200</span>
<span class="t" style="left:310.21px;top:326.00px;font-size:19.35px;line-height:19.35px;transform:scaleX(0.9940);color:#000;font-weight:normal;">45000</span>
<span class="t" style="left:458.40px;top:326.00px;font-size:19.35px;line-height:19.35px;transform:scaleX(1.0772);color:#000;font-weight:normal;">No</span>
<span class="t" style="left:45.40px;top:355.00px;font-size:19.35px;line-height:19.35px;transform:scaleX(1.0331);color:#000;font-weight:normal;">Worker 3</span>
<span class="t" style="left:194.22px;top:355.00px;font-size:19.35px;line-height:19.35px;transform:scaleX(0.9999);color:#000;font-weight:normal;">300</span>
<span class="t" style="left:310.04px;top:355.00px;font-size:19.35px;line-height:19.35px;transform:scaleX(0.9936);color:#000;font-weight:normal;">76000</span>
<span class="t" style="left:456.63px;top:355.00px;font-size:19.35px;line-height:19.35px;transform:scaleX(0.9816);color:#000;font-weight:normal;">Yes</span>
<span class="t" style="left:45.40px;top:384.00px;font-size:19.35px;line-height:19.35px;transform:scaleX(1.0305);color:#000;font-weight:normal;">Worker 4</span>
<span class="t" style="left:194.02px;top:384.00px;font-size:19.35px;line-height:19.35px;transform:scaleX(1.0061);color:#000;font-weight:normal;">500</span>
<span class="t" style="left:305.26px;top:384.00px;font-size:19.35px;line-height:19.35px;transform:scaleX(0.9823);color:#000;font-weight:normal;">101234</span>
<span class="t" style="left:456.63px;top:384.00px;font-size:19.35px;line-height:19.35px;transform:scaleX(0.9816);color:#000;font-weight:normal;">Yes</span>
<span class="t" style="left:45.40px;top:413.00px;font-size:19.35px;line-height:19.35px;transform:scaleX(1.0331);color:#000;font-weight:normal;">Worker 5</span>
<span class="t" style="left:193.82px;top:413.00px;font-size:19.35px;line-height:19.35px;transform:scaleX(1.0125);color:#000;font-weight:normal;">600</span>
<span class="t" style="left:305.26px;top:413.00px;font-size:19.35px;line-height:19.35px;transform:scaleX(0.9823);color:#000;font-weight:normal;">123444</span>
<span class="t" style="left:456.63px;top:413.00px;font-size:19.35px;line-height:19.35px;transform:scaleX(0.9816);color:#000;font-weight:normal;">Yes</span>
<span class="t" style="left:45.40px;top:442.00px;font-size:19.35px;line-height:19.35px;transform:scaleX(1.0331);color:#000;font-weight:normal;">Worker 6</span>
<span class="t" style="left:193.82px;top:442.00px;font-size:19.35px;line-height:19.35px;transform:scaleX(1.0125);color:#000;font-weight:normal;">700</span>
<span class="t" style="left:305.26px;top:442.00px;font-size:19.35px;line-height:19.35px;transform:scaleX(0.9854);color:#000;font-weight:normal;">145000</span>
<span class="t" style="left:456.63px;top:442.00px;font-size:19.35px;line-height:19.35px;transform:scaleX(0.9816);color:#000;font-weight:normal;">Yes</span>
<span class="t" style="left:245.00px;top:51.00px;font-size:10.45px;line-height:10.45px;transform:scaleX(0.9998);color:#444;font-weight:normal;">A</span>
<span class="t" style="left:262.00px;top:52.00px;font-size:8.30px;line-height:8.30px;transform:scaleX(1.0970);color:#444;font-weight:normal;">A</span>
<span class="t" style="left:127.25px;top:74.00px;font-size:9.00px;line-height:9.00px;transform:scaleX(1.0510);color:#444;font-weight:bold;">B</span>
<span class="t" style="left:160.39px;top:74.00px;font-size:9.00px;line-height:9.00px;transform:scaleX(1.2461);color:#444;font-weight:bold;">U</span>
<span class="t" style="left:165.80px;top:117.05px;font-size:17.00px;line-height:17.00px;transform:scaleX(1.1662);color:#555;font-weight:normal;font-style:italic;font-family:'Liberation Serif',serif;">fx</span>

</body></html>
